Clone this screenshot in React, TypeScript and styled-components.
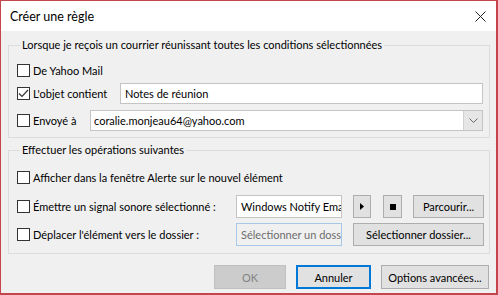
import styled, { createGlobalStyle } from 'styled-components'

const Global = createGlobalStyle`
	html, body {
		margin: 0;
		padding: 0;
		background: #f0f0f0;
	}
	* {
		box-sizing: border-box;
	}
`

const Check: React.FC<{ checked?: boolean }> = ({ checked }) => (
	<Box>
		{checked && (
			<svg width="11" height="11" viewBox="0 0 11 11">
				<path d="M1 5.5 L4 8.5 L10 2" fill="none" stroke="#333" strokeWidth="1.2" />
			</svg>
		)}
	</Box>
)

const App: React.FC = () => {
	return (
		<>
			<Global />
			<Window>
				<TitleBar>
					<Title>Créer une règle</Title>
					<Close>
						<svg width="11" height="11" viewBox="0 0 11 11">
							<path d="M0.5 0.5 L10.5 10.5 M10.5 0.5 L0.5 10.5" stroke="#222" strokeWidth="1" />
						</svg>
					</Close>
				</TitleBar>
				<Body>
					<Group $bottom={6}>
						<Legend>Lorsque je reçois un courrier réunissant toutes les conditions sélectionnées</Legend>
						<Row $top={6} $height={22}>
							<Check />
							<Label>De Yahoo Mail</Label>
						</Row>
						<Row $top={2} $height={21}>
							<Check checked />
							<Label $width={87}>L'objet contient</Label>
							<Input $grow>Notes de réunion</Input>
						</Row>
						<Row $top={6} $height={21}>
							<Check />
							<Label $width={57}>Envoyé à</Label>
							<Select>
								<span>coralie.monjeau64@yahoo.com</span>
								<DropButton>
									<svg width="9" height="5" viewBox="0 0 9 5">
										<path d="M0.5 0.5 L4.5 4.5 L8.5 0.5" fill="none" stroke="#666" strokeWidth="1" />
									</svg>
								</DropButton>
							</Select>
						</Row>
					</Group>
					<Group $bottom={7} $top={4}>
						<Legend>Effectuer les opérations suivantes</Legend>
						<Row $top={8} $height={22}>
							<Check />
							<Label>Afficher dans la fenêtre Alerte sur le nouvel élément</Label>
						</Row>
						<Row $top={7} $height={23}>
							<Check />
							<Label $width={203}>Émettre un signal sonore sélectionné :</Label>
							<Input $width={106}>Windows Notify Email</Input>
							<Button $width={18} $left={11}>
								<svg width="4" height="7" viewBox="0 0 4 7">
									<path d="M0 0 L4 3.5 L0 7 Z" fill="#000" />
								</svg>
							</Button>
							<Button $width={19} $left={12}>
								<StopMark />
							</Button>
							<Button $width={71} $left={11}>Parcourir...</Button>
						</Row>
						<Row $top={5} $height={23}>
							<Check />
							<Label $width={203}>Déplacer l'élément vers le dossier :</Label>
							<Input $width={106} $placeholder>Sélectionner un doss</Input>
							<Button $width={131} $left={11}>Sélectionner dossier...</Button>
						</Row>
					</Group>
					<Footer>
						<Button $width={72} $disabled>OK</Button>
						<Button $width={75} $default>Annuler</Button>
						<Button $width={108}>Options avancées...</Button>
					</Footer>
				</Body>
			</Window>
		</>
	)
}

export default App

const Window = styled.div`
	width: 498px;
	height: 295px;
	border: 1px solid #c4464c;
	border-bottom-width: 2px;
	border-right-width: 2px;
	background: #f0f0f0;
	font-family: Lato, 'Noto Sans', sans-serif;
	font-size: 11px;
	color: #000;
	display: flex;
	flex-direction: column;
`
const TitleBar = styled.div`
	height: 30px;
	background: #fff;
	display: flex;
	align-items: center;
	justify-content: space-between;
	padding: 0 10px 0 9px;
`
const Title = styled.span`
	font-size: 12.5px;
`
const Close = styled.span`
	display: flex;
	margin-top: 1px;
`
const Body = styled.div`
	flex: 1;
	padding: 6px 6px 0 7px;
	display: flex;
	flex-direction: column;
`
const Group = styled.fieldset<{ $bottom: number; $top?: number }>`
	margin: ${(p) => p.$top || 0}px 0 0;
	border: 1px solid #dcdcdc;
	padding: 0 6px ${(p) => p.$bottom}px 8px;
	min-width: 0;
`
const Legend = styled.legend`
	padding: 0 2px;
	margin-left: 3px;
	line-height: 16px;
`
const Row = styled.div<{ $top: number; $height: number }>`
	display: flex;
	align-items: center;
	margin-top: ${(p) => p.$top}px;
	height: ${(p) => p.$height}px;
`
const Box = styled.span`
	width: 13px;
	height: 13px;
	flex: none;
	border: 1px solid #333;
	background: #fff;
	display: flex;
	align-items: center;
	justify-content: center;
`
const Label = styled.span<{ $width?: number }>`
	margin-left: 3px;
	white-space: nowrap;
	${(p) => (p.$width ? `width: ${p.$width}px; flex: none;` : '')}
`
const Input = styled.div<{ $width?: number; $grow?: boolean; $placeholder?: boolean }>`
	height: 100%;
	${(p) => (p.$grow ? 'flex: 1;' : `width: ${p.$width}px; flex: none;`)}
	background: ${(p) => (p.$placeholder ? '#f0f0f0' : '#fff')};
	border: 1px solid ${(p) => (p.$placeholder ? '#a8c8e8' : '#c4c4c4')};
	color: ${(p) => (p.$placeholder ? '#6d6d6d' : '#000')};
	padding: 0 4px;
	display: flex;
	align-items: center;
	white-space: nowrap;
	overflow: hidden;
`
const Select = styled.div`
	flex: 1;
	height: 100%;
	background: #fff;
	border: 1px solid #c4c4c4;
	display: flex;
	align-items: center;
	justify-content: space-between;
	padding-left: 3px;

	span {
		white-space: nowrap;
	}
`
const DropButton = styled.span`
	width: 19px;
	height: 19px;
	background: #e6e6e6;
	border-left: 1px solid #d0d0d0;
	display: flex;
	align-items: center;
	justify-content: center;
`
const Button = styled.div<{ $width: number; $left?: number; $disabled?: boolean; $default?: boolean }>`
	width: ${(p) => p.$width}px;
	height: 100%;
	flex: none;
	margin-left: ${(p) => p.$left || 0}px;
	background: ${(p) => (p.$disabled ? '#cccccc' : '#e1e1e1')};
	border: ${(p) => (p.$default ? '2px solid #0078d7' : p.$disabled ? '1px solid #bfbfbf' : '1px solid #adadad')};
	color: ${(p) => (p.$disabled ? '#838383' : '#000')};
	display: flex;
	align-items: center;
	justify-content: center;
	white-space: nowrap;
`
const StopMark = styled.span`
	width: 6px;
	height: 6px;
	background: #000;
`
const Footer = styled.div`
	display: flex;
	justify-content: flex-end;
	gap: 10px;
	height: 24px;
	margin-top: 11px;
	padding-right: 1px;
`
